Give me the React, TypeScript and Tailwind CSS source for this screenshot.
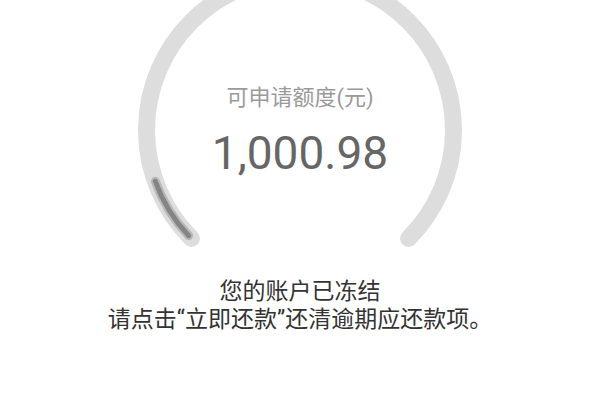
import React from "react";

const CX = 300;
const CY = 130;
const R = 153.5;

function pt(deg: number) {
  const a = (deg * Math.PI) / 180;
  return [CX + R * Math.cos(a), CY + R * Math.sin(a)];
}

function arc(from: number, to: number) {
  const [x1, y1] = pt(from);
  const [x2, y2] = pt(to);
  const large = to - from > 180 ? 1 : 0;
  return `M ${x1} ${y1} A ${R} ${R} 0 ${large} 1 ${x2} ${y2}`;
}

export default function App() {
  return (
    <div
      className="relative w-full h-[400px] bg-white flex flex-col items-center overflow-hidden"
      style={{ fontFamily: 'Roboto, "Noto Sans CJK SC", sans-serif' }}
    >
      <svg
        className="absolute left-0 top-0"
        width={600}
        height={270}
        viewBox="0 0 600 270"
      >
        <path d={arc(135, 405)} fill="none" stroke="#dddddd" strokeWidth={17} strokeLinecap="round" />
        <path d={arc(136.5, 160.5)} fill="none" stroke="#b8b8b8" strokeWidth={9} strokeLinecap="round" />
        <path d={arc(136.5, 160.5)} fill="none" stroke="#858585" strokeWidth={5} strokeLinecap="round" />
      </svg>
      <div className="relative flex flex-col items-center pt-[83px]">
        <div className="text-[22px] leading-[30px] text-[#9a9a9a]">可申请额度(元)</div>
        <div className="mt-[15px] text-[46px] leading-[50px] text-[#666666]">1,000.98</div>
      </div>
      <div className="relative mt-[100px] flex flex-col items-center text-[23px] leading-[28px] text-[#333333]">
        <div>您的账户已冻结</div>
        <div>请点击“立即还款”还清逾期应还款项。</div>
      </div>
    </div>
  );
}
